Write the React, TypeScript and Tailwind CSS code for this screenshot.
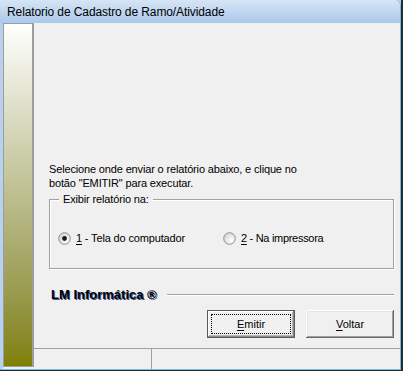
import React from 'react';

function Radio({ checked }: { checked?: boolean }) {
  return (
    <svg width="13" height="13" viewBox="0 0 13 13" aria-hidden="true">
      <defs>
        <radialGradient id={checked ? 'rg1' : 'rg2'} cx="0.65" cy="0.65" r="0.7">
          <stop offset="0" stopColor="#ffffff" />
          <stop offset="1" stopColor="#d4d4d4" />
        </radialGradient>
      </defs>
      <circle cx="6.5" cy="6.5" r="5.8" fill={`url(#${checked ? 'rg1' : 'rg2'})`} stroke="#8f8f8f" strokeWidth="1" />
      {checked && <circle cx="6.5" cy="6.5" r="2.4" fill="#1c1c1c" />}
    </svg>
  );
}

function Button({ label, accel, isDefault }: { label: string; accel: string; isDefault?: boolean }) {
  return (
    <button
      className={`relative w-[88px] h-[28px] bg-[#f0f0f0] text-black flex items-center justify-center ${
        isDefault
          ? 'border border-[#5a5a5a] shadow-[inset_-1px_-1px_#8a8a8a,inset_1px_1px_#fff,inset_-2px_-2px_#b4b4b4]'
          : 'shadow-[inset_-1px_-1px_#696969,inset_1px_1px_#fff,inset_-2px_-2px_#a0a0a0,inset_2px_2px_#e6e6e6]'
      }`}
    >
      {isDefault && <span className="absolute inset-[3px] border border-dotted border-black" />}
      <span>
        <u className="underline-offset-2">{accel}</u>
        {label}
      </span>
    </button>
  );
}

export default function App() {
  return (
    <div
      className="w-[403px] h-[371px] flex flex-col border-r-2 border-b border-[#2a2a2a] bg-[#b9d1ea] text-[11px] text-black select-none"
      style={{ fontFamily: '"Liberation Sans", Arial, sans-serif' }}
    >
      <div className="flex-1 flex flex-col border-r border-b border-[#6cbde8] rounded-tr-[6px] overflow-hidden">
        {/* Title bar */}
        <div className="h-[23px] shrink-0 flex items-center pl-[7px] pt-[1px] bg-gradient-to-b from-[#d6e5f5] to-[#aac9ea] text-[12px] tracking-[-0.1px] text-black">
          Relatorio de Cadastro de Ramo/Atividade
        </div>

        {/* Client */}
        <div className="flex-1 flex ml-[3px] bg-[#f0f0f0]">
          {/* Side bar */}
          <div className="w-[31px] mb-[2px] border border-[#9d9d9d] border-r-2 bg-gradient-to-b from-[#ffffff] to-[#808000]" />

          <div className="flex-1 flex flex-col">
            <div className="flex-1 flex flex-col pl-[15px] pr-[6px] tracking-[-0.15px]">
              <p className="mt-[139px] leading-[14px]">
                Selecione onde enviar o relatório abaixo, e clique no
                <br />
                botão "EMITIR" para executar.
              </p>

              {/* Group box */}
              <div className="relative mt-[9px] h-[70px] border border-[#a0a0a0] shadow-[1px_1px_0_#fff,inset_1px_1px_0_#fff]">
                <span className="absolute left-[9px] top-[-8px] px-[4px] bg-[#f0f0f0] leading-[14px]">
                  Exibir relatório na:
                </span>
                <div className="mt-[30px] flex items-center">
                  <div className="ml-[8px] flex items-center gap-[5px]">
                    <Radio checked />
                    <span>
                      <u className="underline-offset-2">1</u> - Tela do computador
                    </span>
                  </div>
                  <div className="ml-[38px] flex items-center gap-[5px]">
                    <Radio />
                    <span className="tracking-[-0.3px]">
                      <u className="underline-offset-2">2</u> - Na impressora
                    </span>
                  </div>
                </div>
              </div>

              {/* LM line */}
              <div className="mt-[18px] h-[16px] flex items-center">
                <span className="ml-[2px] text-[13px] font-bold tracking-normal [text-shadow:1px_1px_0_#3a5896]">
                  LM Informática ®
                </span>
                <div className="flex-1 ml-[10px] h-0 border-t border-[#a0a0a0] border-b border-b-white" />
              </div>

              {/* Buttons */}
              <div className="mt-[7px] flex justify-end gap-[11px] tracking-normal">
                <Button accel="E" label="mitir" isDefault />
                <Button accel="V" label="oltar" />
              </div>
            </div>

            {/* Status bar */}
            <div className="h-[21px] shrink-0 flex border-t border-[#a0a0a0]">
              <div className="w-[118px] border-r border-[#a0a0a0]" />
              <div className="flex-1" />
            </div>
          </div>
        </div>
      </div>
    </div>
  );
}
